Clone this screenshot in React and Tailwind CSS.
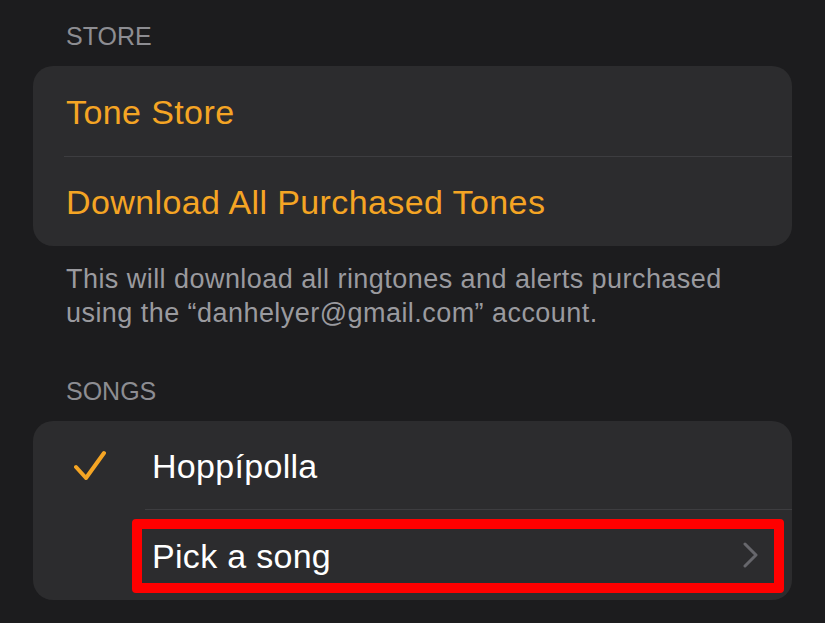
function Header({ children }) {
  return (
    <div className="pl-[33px] text-[25px] leading-[30px] text-[#8d8d92] uppercase">
      {children}
    </div>
  );
}

function Check() {
  return (
    <svg width="32" height="30" viewBox="0 0 32 30" fill="none">
      <path
        d="M2 17 L12 28 L30 3"
        stroke="#f5a524"
        strokeWidth="4"
        strokeLinecap="round"
        strokeLinejoin="round"
      />
    </svg>
  );
}

function Chevron() {
  return (
    <svg width="16" height="26" viewBox="0 0 16 26" fill="none">
      <path
        d="M2 2 L13 13 L2 24"
        stroke="#67676c"
        strokeWidth="3"
        strokeLinecap="round"
        strokeLinejoin="round"
      />
    </svg>
  );
}

export default function App() {
  return (
    <div
      className="w-[825px] h-[623px] overflow-hidden bg-[#1c1c1e] px-[33px] pt-[21px]"
      style={{ fontFamily: '"Liberation Sans", Arial, sans-serif' }}
    >
      <Header>Store</Header>

      <div className="mt-[15px] rounded-[20px] bg-[#2c2c2e] text-[34px] tracking-[0.4px] text-[#f5a524]">
        <div className="h-[90px] flex items-center pl-[33px] pt-[2px]">Tone Store</div>
        <div className="ml-[31px] h-px bg-[#3d3d40]" />
        <div className="h-[89px] flex items-center pl-[33px] pt-[2px]">Download All Purchased Tones</div>
      </div>

      <p className="mt-[16px] pl-[33px] text-[27px] leading-[34px] tracking-[0.45px] text-[#9a9a9f]">
        This will download all ringtones and alerts purchased
        <br />
        using the “danhelyer@gmail.com” account.
      </p>

      <div className="mt-[46px]">
        <Header>Songs</Header>
      </div>

      <div className="mt-[15px] rounded-[20px] bg-[#2c2c2e] text-[34px] tracking-[0.3px] text-white">
        <div className="h-[88px] flex items-center">
          <div className="w-[119px] flex justify-start pl-[41px]">
            <Check />
          </div>
          <span className="pt-[2px]">Hoppípolla</span>
        </div>
        <div className="ml-[112px] h-px bg-[#3d3d40]" />
        <div className="relative h-[90px] flex items-center pl-[119px] pr-[33px]">
          <span className="flex-1 pt-[2px]">Pick a song</span>
          <Chevron />
          <div className="absolute left-[99px] right-[8px] top-[9px] bottom-[7px] border-[10px] border-[#ff0000] rounded-[4px] pointer-events-none" />
        </div>
      </div>
    </div>
  );
}
